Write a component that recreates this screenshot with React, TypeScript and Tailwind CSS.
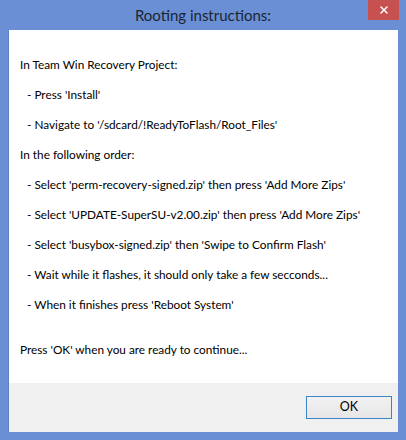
import React from 'react';
import { X } from 'lucide-react';

const lines = [
    { text: "In Team Win Recovery Project:", indent: false },
    { text: "- Press 'Install'", indent: true },
    { text: "- Navigate to '/sdcard/!ReadyToFlash/Root_Files'", indent: true },
    { text: "In the following order:", indent: false },
    { text: "- Select 'perm-recovery-signed.zip' then press 'Add More Zips'", indent: true },
    { text: "- Select 'UPDATE-SuperSU-v2.00.zip' then press 'Add More Zips'", indent: true },
    { text: "- Select 'busybox-signed.zip' then 'Swipe to Confirm Flash'", indent: true },
    { text: "- Wait while it flashes, it should only take a few secconds...", indent: true },
    { text: "- When it finishes press 'Reboot System'", indent: true },
];

export default function App() {
    return (
        <div className="w-[406px] h-[440px] bg-[#6b8fd5] flex flex-col font-['Lato',sans-serif]">
            {/* title bar */}
            <div className="h-[30px] relative flex items-center justify-center">
                <span className="text-[15px] text-[#1a2536] leading-none">Rooting instructions:</span>
                <button className="absolute right-[7px] top-0 w-[31px] h-[20px] bg-[#c75050] flex items-center justify-center text-white">
                    <X className="w-[12px] h-[12px]" strokeWidth={3} />
                </button>
            </div>

            <div className="mx-[8px] flex-1 flex flex-col border-l border-[#5d7fc2]">
                <div className="flex-1 bg-white pt-[20px] pl-[11px] text-[11.8px] text-black">
                    {lines.map((l, i) => (
                        <div key={i} className={`h-[30px] flex items-center whitespace-nowrap ${l.indent ? 'pl-[7px]' : ''}`}>
                            {l.text}
                        </div>
                    ))}
                    <div className="h-[30px] mt-[15px] flex items-center">Press 'OK' when you are ready to continue...</div>
                </div>
                <div className="h-[49px] bg-[#f0f0f0] flex items-center justify-end pr-[6px]">
                    <button className="w-[86px] h-[23px] border border-[#3c84c8] bg-gradient-to-b from-[#f2f2f2] to-[#e6e6e6] text-[12.5px] text-black flex items-center justify-center">
                        OK
                    </button>
                </div>
            </div>
            <div className="h-[8px]" />
        </div>
    );
}
